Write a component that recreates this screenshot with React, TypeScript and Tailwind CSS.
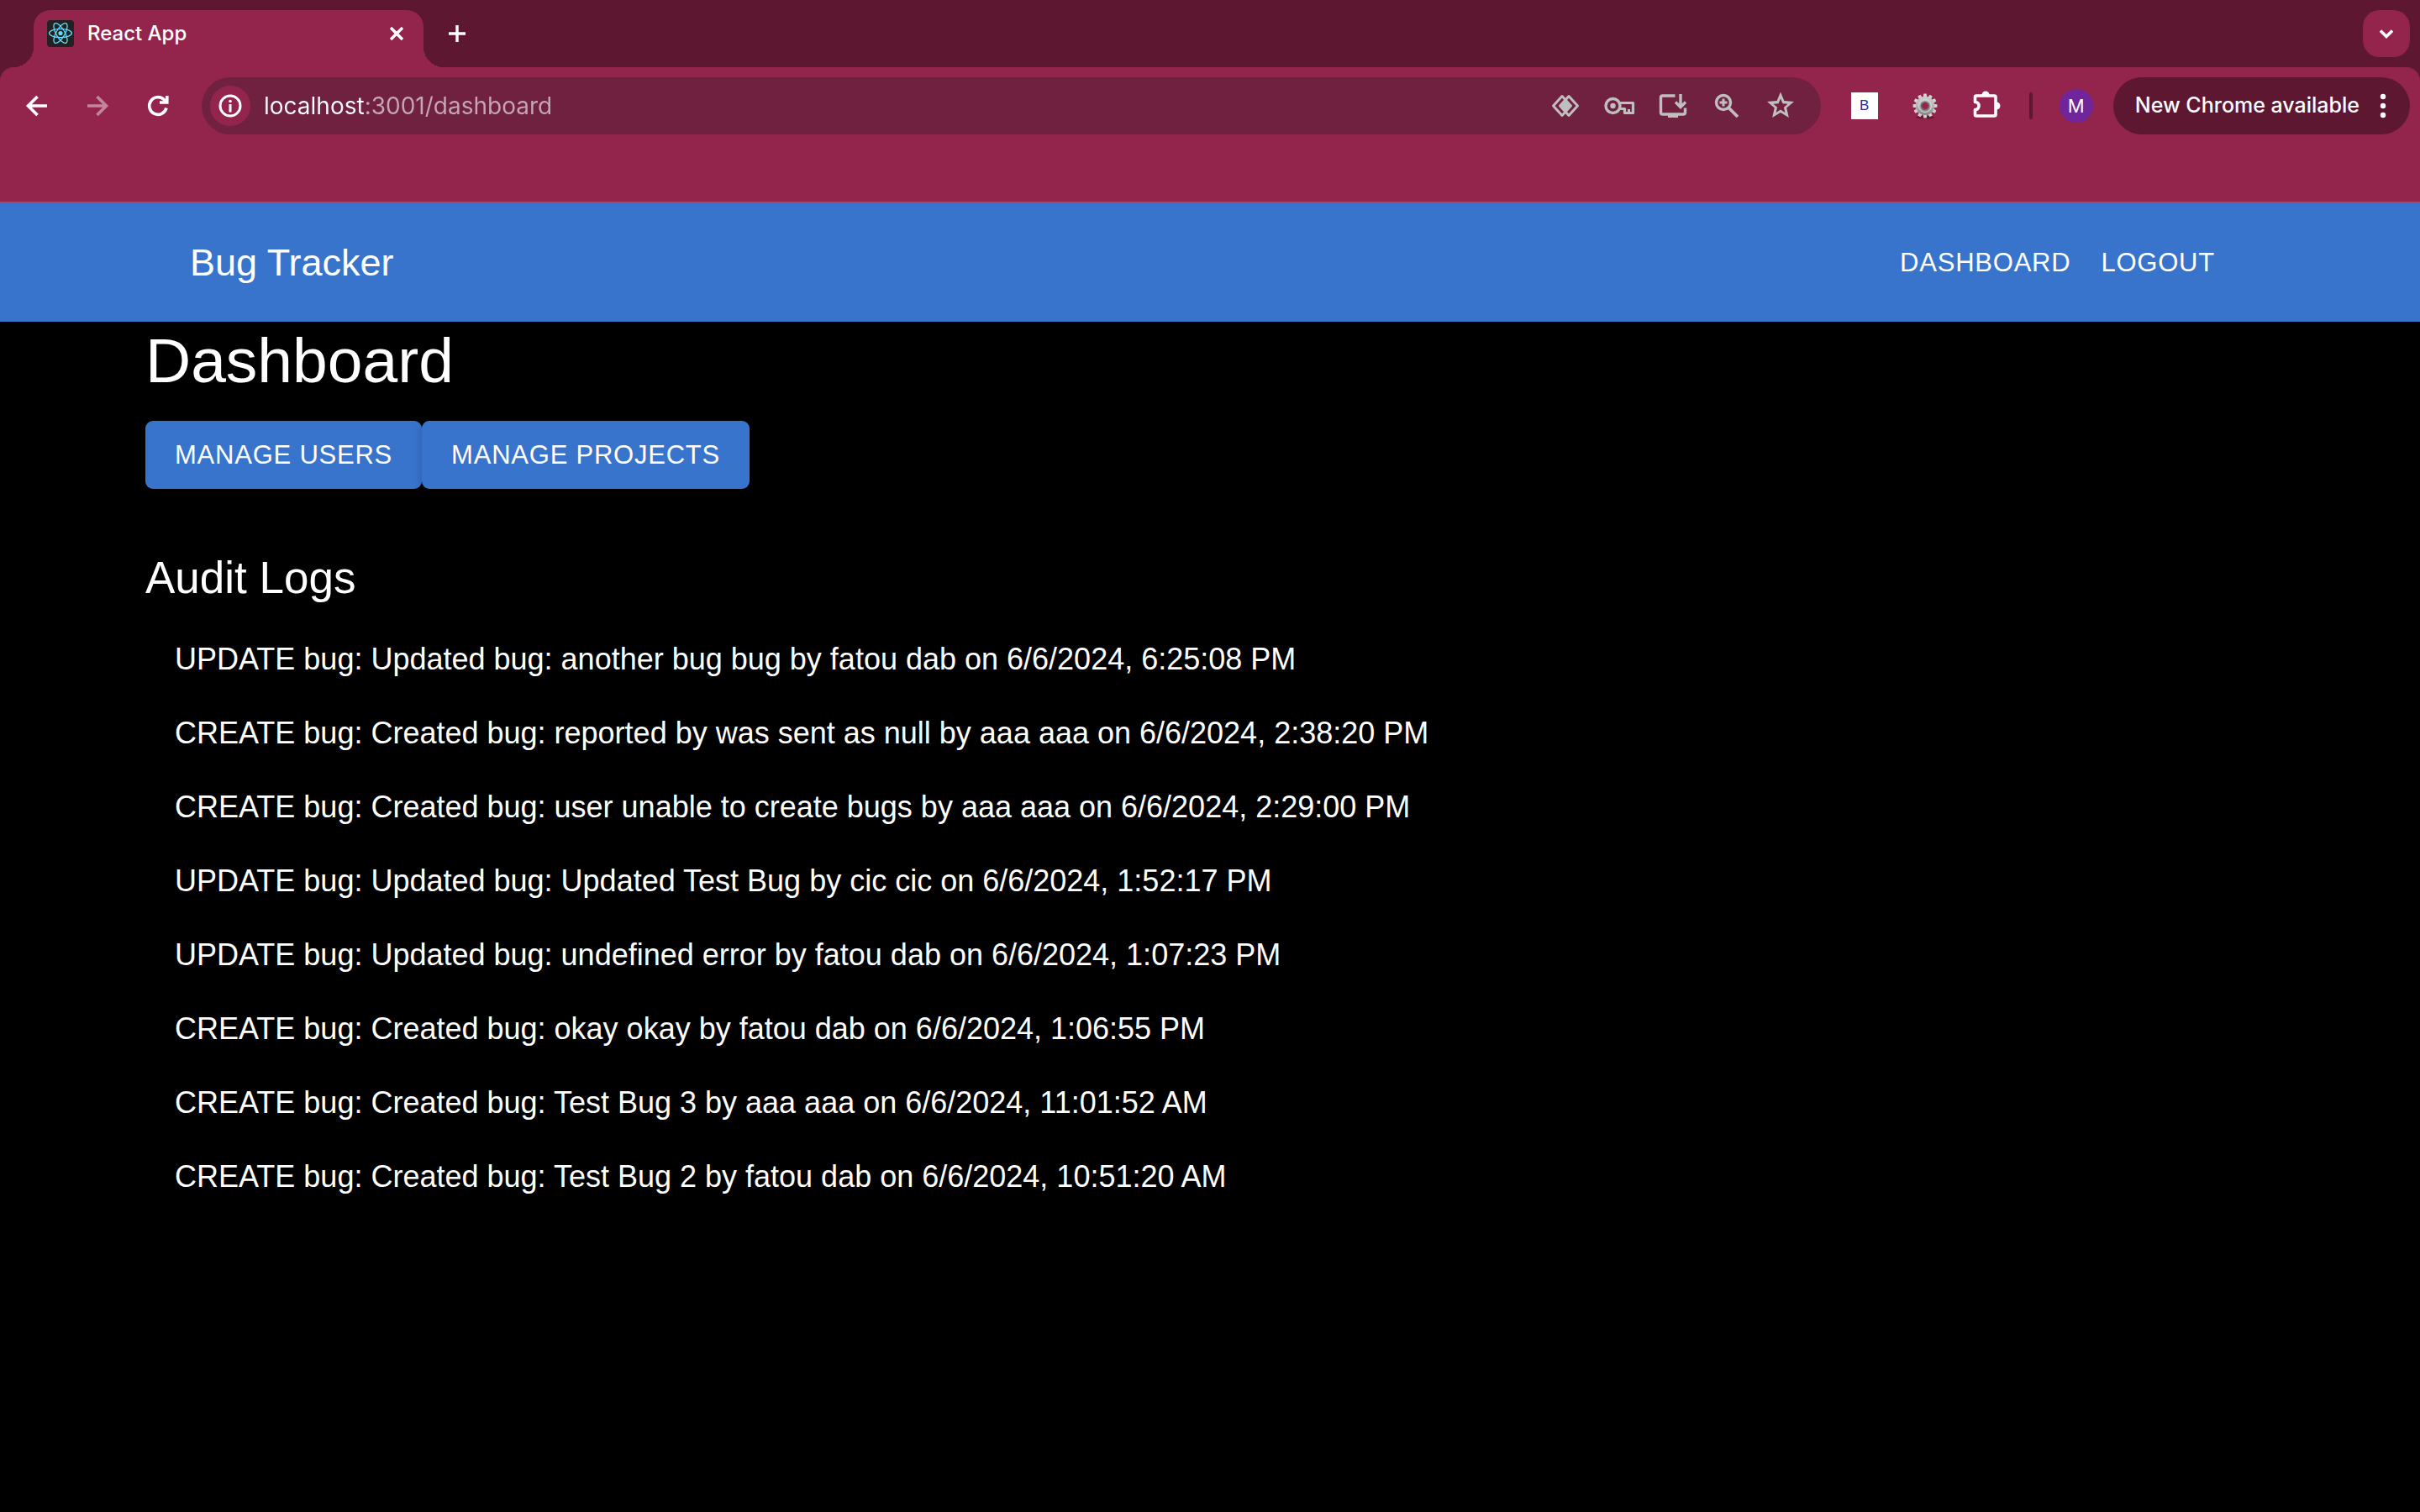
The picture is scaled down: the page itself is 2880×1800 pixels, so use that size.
import type { ReactNode } from "react";

const logs = [
  "UPDATE bug: Updated bug: another bug bug by fatou dab on 6/6/2024, 6:25:08 PM",
  "CREATE bug: Created bug: reported by was sent as null by aaa aaa on 6/6/2024, 2:38:20 PM",
  "CREATE bug: Created bug: user unable to create bugs by aaa aaa on 6/6/2024, 2:29:00 PM",
  "UPDATE bug: Updated bug: Updated Test Bug by cic cic on 6/6/2024, 1:52:17 PM",
  "UPDATE bug: Updated bug: undefined error by fatou dab on 6/6/2024, 1:07:23 PM",
  "CREATE bug: Created bug: okay okay by fatou dab on 6/6/2024, 1:06:55 PM",
  "CREATE bug: Created bug: Test Bug 3 by aaa aaa on 6/6/2024, 11:01:52 AM",
  "CREATE bug: Created bug: Test Bug 2 by fatou dab on 6/6/2024, 10:51:20 AM",
];

// Icons share a 48px box whose origin is its centre.
function Icon({ children }: { children: ReactNode }) {
  return (
    <svg viewBox="-24 -24 48 48" className="size-12 shrink-0" fill="none" stroke="currentColor" strokeWidth="4" aria-hidden="true">
      {children}
    </svg>
  );
}

function IconButton({ label, className, children }: { label: string; className: string; children: ReactNode }) {
  return (
    <button type="button" aria-label={label} className={`flex shrink-0 items-center justify-center ${className}`}>
      <Icon>{children}</Icon>
    </button>
  );
}

function Favicon() {
  return (
    <svg viewBox="0 0 32 32" className="size-8 shrink-0" aria-hidden="true">
      <rect width="32" height="32" rx="4" fill="#222222" />
      <g fill="none" stroke="#61dafb" strokeWidth="1.3" transform="translate(16 15.5)">
        <ellipse rx="13.4" ry="5.1" />
        <ellipse rx="13.4" ry="5.1" transform="rotate(60)" />
        <ellipse rx="13.4" ry="5.1" transform="rotate(120)" />
        <circle r="2.6" fill="#61dafb" stroke="none" />
      </g>
    </svg>
  );
}

function Gear() {
  return (
    <svg viewBox="-24 -24 48 48" className="size-12 shrink-0" aria-hidden="true">
      <defs>
        <linearGradient id="metal" x1="0" y1="-14" x2="0" y2="14" gradientUnits="userSpaceOnUse">
          <stop offset="0" stopColor="#d4d4d4" />
          <stop offset="0.5" stopColor="#b5b5b5" />
          <stop offset="1" stopColor="#777777" />
        </linearGradient>
      </defs>
      <ellipse cx="0" cy="13.5" rx="11" ry="2" fill="#4a1227" opacity="0.6" />
      <g fill="url(#metal)">
        {Array.from({ length: 12 }, (_, i) => (
          <path key={i} d="M-2.6 -9 L-1.7 -14.4 H1.7 L2.6 -9 Z" transform={`rotate(${i * 30})`} />
        ))}
        <path fillRule="evenodd" d="M0 -11 A11 11 0 1 1 0 11 A11 11 0 1 1 0 -11 Z M0 -4 A4 4 0 1 0 0 4 A4 4 0 1 0 0 -4 Z" />
      </g>
      <circle r="7.5" fill="none" stroke="#d9d9d9" strokeWidth="1" />
      <circle r="4.8" fill="none" stroke="#6b6b6b" strokeWidth="1.4" />
    </svg>
  );
}

function TabStrip() {
  return (
    <div className="flex h-20 items-start bg-[#5d1731] pl-4 pr-3 pt-3">
      <div className="flex">
        <span className="size-6 self-end bg-[radial-gradient(circle_at_0_0,#5d1731_24px,#93254d_24px)]" />
        <div className="flex h-[68px] w-[464px] items-start rounded-t-[20px] bg-[#93254d] px-4 pt-3">
          <Favicon />
          <span className="ml-4 flex-1 text-[24px] leading-8 font-medium text-white">React App</span>
          <button type="button" aria-label="Close tab" className="flex size-8 items-center justify-center text-white">
            <Icon>
              <path d="M-7 -7 L7 7 M7 -7 L-7 7" strokeWidth="3.4" />
            </Icon>
          </button>
        </div>
        <span className="size-6 self-end bg-[radial-gradient(circle_at_100%_0,#5d1731_24px,#93254d_24px)]" />
      </div>
      <IconButton label="New tab" className="-ml-2 h-14 w-12 text-white">
        <path d="M-10 0 H10 M0 -10 V10" strokeWidth="3.4" />
      </IconButton>
      <IconButton label="Search tabs" className="ml-auto size-14 rounded-[20px] bg-[#93254d] text-white">
        <path d="M-7 -3.5 L0 3.5 L7 -3.5" strokeWidth="3.6" />
      </IconButton>
    </div>
  );
}

function AddressBar() {
  return (
    <div className="flex h-[68px] min-w-0 flex-1 items-center rounded-full bg-[#712140] pl-[10px] pr-4 text-[#bfbfbf]">
      <IconButton label="View site information" className="size-12 rounded-full bg-[#93254d] text-white">
        <circle r="12" strokeWidth="3" />
        <circle cy="-5.5" r="1.8" fill="currentColor" stroke="none" />
        <path d="M0 -2 V7.5" strokeWidth="3" />
      </IconButton>
      <input
        aria-label="Address"
        readOnly
        value="localhost:3001/dashboard"
        className="ml-4 h-12 min-w-0 flex-1 bg-[linear-gradient(to_right,#ffffff_120px,#c6a6b3_120px)] bg-clip-text text-[28px] text-transparent outline-none"
      />
      <IconButton label="Open in app" className="h-12 w-16">
        <path d="M-4 -11.5 L-14.5 0 L-4 11.5 L6.5 0 Z" strokeWidth="3" strokeLinejoin="round" />
        <path d="M4 -11.5 L14.5 0 L4 11.5 L-6.5 0 Z" strokeWidth="3" strokeLinejoin="round" />
        <path d="M0 -8 L7 0 L0 8 L-7 0 Z" fill="currentColor" stroke="none" />
      </IconButton>
      <IconButton label="Passwords" className="h-12 w-16">
        <circle cx="-7.5" r="8.5" strokeWidth="3.4" />
        <circle cx="-7.5" r="3.2" fill="currentColor" stroke="none" />
        <path d="M0 -3.5 H16.5 V8.5 H6.5 V3.5 H0" strokeWidth="3.2" strokeLinejoin="round" />
        <path d="M11.5 8 V4" strokeWidth="3" />
      </IconButton>
      <IconButton label="Install page" className="h-12 w-16">
        <path d="M2.5 -12 H-12.5 Q-14.5 -12 -14.5 -10 V8 Q-14.5 10 -12.5 10 H12.5 Q14.5 10 14.5 8 V2.5" strokeWidth="3.4" />
        <path d="M-6 10 H6 V14 H-6 Z" fill="currentColor" stroke="none" />
        <path d="M9 -14 V1 M3 -4.5 L9 1.5 L15 -4.5" strokeWidth="3.4" />
      </IconButton>
      <IconButton label="Zoom" className="h-12 w-16">
        <circle cx="-4" cy="-4" r="8.5" strokeWidth="3.4" />
        <path d="M2.5 2.5 L13 13" strokeWidth="3.8" />
        <path d="M-8.5 -4 H0.5 M-4 -8.5 V0.5" strokeWidth="3" />
      </IconButton>
      <IconButton label="Bookmark this tab" className="h-12 w-16">
        <path
          d="M0 -16.5 L4.4 -5.9 L16 -5 L7.2 2.6 L9.9 14 L0 7.9 L-9.9 14 L-7.2 2.6 L-16 -5 L-4.4 -5.9 Z M0 -8.6 L-2.5 -2.8 L-8.6 -2.3 L-3.9 1.8 L-5.3 8 L0 4.6 L5.3 8 L3.9 1.8 L8.6 -2.3 L2.5 -2.8 Z"
          fill="currentColor"
          fillRule="evenodd"
          stroke="none"
        />
      </IconButton>
    </div>
  );
}

function Toolbar() {
  return (
    <div className="bg-[#5d1731]">
      <div className="flex h-40 items-start rounded-t-2xl bg-[#93254d] pl-2 pr-3 pt-3">
        <div className="flex h-[68px] items-center text-white">
          <IconButton label="Back" className="h-12 w-[72px]">
            <path d="M12 0 H-10 M0.5 -11 L-10.5 0 L0.5 11" strokeWidth="3.6" />
          </IconButton>
          <IconButton label="Forward" className="h-12 w-[72px] text-[#c4869d]">
            <path d="M-12 0 H10 M-0.5 -11 L10.5 0 L-0.5 11" strokeWidth="3.6" />
          </IconButton>
          <IconButton label="Reload" className="h-12 w-[72px]">
            <path d="M10 2.5 A10.3 10.3 0 1 1 7.3 -7.3 L9 -5" strokeWidth="3.6" />
            <path d="M10.8 -12 V-4 H2" strokeWidth="3.6" />
          </IconButton>
        </div>
        <div className="ml-4 flex min-w-0 flex-1">
          <AddressBar />
        </div>
        <div className="ml-4 flex h-[68px] items-center text-white">
          <button type="button" aria-label="Extension B" className="flex h-12 w-[72px] items-center justify-center">
            <span className="flex size-8 items-center justify-center bg-white font-['Liberation_Sans',Arial,sans-serif] text-[17px] leading-8 text-[#2b2b9e]">B</span>
          </button>
          <button type="button" aria-label="Extension settings" className="flex h-12 w-[72px] items-center justify-center">
            <Gear />
          </button>
          <IconButton label="Extensions" className="h-12 w-[72px]">
            <path
              d="M-12.5 -4.5 V-10.5 Q-12.5 -12 -11 -12 H10.5 Q12 -12 12 -10.5 V10.5 Q12 12 10.5 12 H-11 Q-12.5 12 -12.5 10.5 V4.5 C-6.5 5 -6.5 -5 -12.5 -4.5 Z"
              strokeWidth="3.6"
              strokeLinejoin="round"
            />
            <path d="M-4.5 -13 A4.5 4.5 0 0 1 4.5 -13 Z M13 -4.5 A4.5 4.5 0 0 1 13 4.5 Z" fill="currentColor" stroke="none" />
          </IconButton>
          <span className="ml-4 h-8 w-1 rounded-full bg-[#5d1731]" />
          <button type="button" aria-label="Profile" className="ml-8 flex size-10 items-center justify-center rounded-full bg-[#70259b] text-[22px]">
            M
          </button>
          <button type="button" className="ml-6 flex h-[68px] items-center gap-1 rounded-full bg-[#5d1731] pl-[26px] pr-2 text-[25px] font-medium whitespace-nowrap">
            New Chrome available
            <Icon>
              <g fill="currentColor" stroke="none">
                <circle cy="-11" r="3.2" />
                <circle r="3.2" />
                <circle cy="11" r="3.2" />
              </g>
            </Icon>
          </button>
        </div>
      </div>
      <div className="h-0.5 bg-[#a8466b]" />
    </div>
  );
}

export default function App() {
  return (
    <div className="flex min-h-screen flex-col bg-black font-['Inter',sans-serif]">
      <TabStrip />
      <Toolbar />
      <div className="font-['Liberation_Sans',Arial,sans-serif] text-white">
        <header className="bg-[#3874cb]">
          <div className="mx-auto flex h-[141px] max-w-[2640px] items-center justify-between px-[106px]">
            <div className="text-[45px] leading-[72px]">Bug Tracker</div>
            <nav className="flex text-[31px] leading-[55px] tracking-wide">
              <a href="#dashboard" className="px-[18px]">DASHBOARD</a>
              <a href="#logout" className="px-[18px]">LOGOUT</a>
            </nav>
          </div>
        </header>
        <main className="mx-auto max-w-[2640px] px-[53px]">
          <h1 className="text-[75px] leading-[92px]">Dashboard</h1>
          <div className="mt-[26px] flex text-[31px] leading-[55px] tracking-wide">
            <button type="button" className="rounded-[9px] bg-[#3874cb] px-[35px] py-[13px] shadow-[0_2px_11px_rgba(0,0,0,0.2)]">MANAGE USERS</button>
            <button type="button" className="rounded-[9px] bg-[#3874cb] px-[35px] py-[13px] shadow-[0_2px_11px_rgba(0,0,0,0.2)]">MANAGE PROJECTS</button>
          </div>
          <h2 className="mt-[70px] text-[53px] leading-[71px]">Audit Logs</h2>
          <ul className="mt-[18px]">
            {logs.map((log) => (
              <li key={log} className="px-[35px] py-[18px] text-[36px] leading-[52px]">
                {log}
              </li>
            ))}
          </ul>
        </main>
      </div>
    </div>
  );
}
